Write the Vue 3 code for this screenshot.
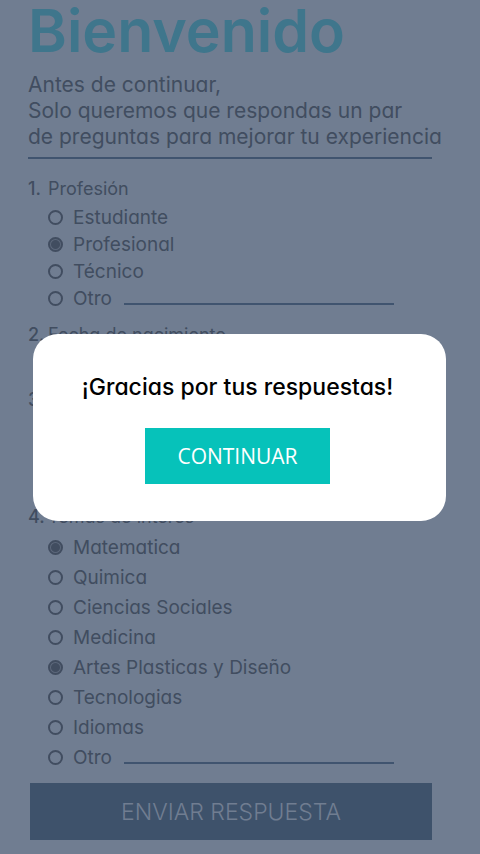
<script setup>
import { ref } from 'vue'

const professions = ['Estudiante', 'Profesional', 'Técnico', 'Otro']
const topics = [
  'Matematica',
  'Quimica',
  'Ciencias Sociales',
  'Medicina',
  'Artes Plasticas y Diseño',
  'Tecnologias',
  'Idiomas',
  'Otro',
]

const profession = ref('Profesional')
const interests = ref(['Matematica', 'Artes Plasticas y Diseño'])
const otherProfession = ref('')
const otherTopic = ref('')
const dialogOpen = ref(true)
</script>

<template>
  <div class="screen">
    <form class="survey" @submit.prevent="dialogOpen = true">
      <header class="intro">
        <h1>Bienvenido</h1>
        <p>
          Antes de continuar,<br />
          Solo queremos que respondas un par<br />
          de preguntas para mejorar tu experiencia
        </p>
      </header>

      <section class="question">
        <h2 id="q1"><span class="number">1.</span>Profesión</h2>
        <ul class="options" role="radiogroup" aria-labelledby="q1">
          <li v-for="(name, i) in professions" :key="name">
            <input :id="'profession-' + i" v-model="profession" type="radio" name="profession" :value="name" class="mark" />
            <label :for="'profession-' + i">{{ name }}</label>
            <input v-if="name === 'Otro'" v-model="otherProfession" type="text" class="line" aria-labelledby="q1" />
          </li>
        </ul>
      </section>

      <section class="question date">
        <h2><span class="number">2.</span>Fecha de nacimiento</h2>
      </section>

      <section class="question third">
        <h2><span class="number">3.</span></h2>
      </section>

      <section class="question">
        <h2 id="q4"><span class="number">4.</span>Temas de interés</h2>
        <ul class="options roomy" role="group" aria-labelledby="q4">
          <li v-for="(name, i) in topics" :key="name">
            <input :id="'topic-' + i" v-model="interests" type="checkbox" :value="name" class="mark" />
            <label :for="'topic-' + i">{{ name }}</label>
            <input v-if="name === 'Otro'" v-model="otherTopic" type="text" class="line" aria-labelledby="q4" />
          </li>
        </ul>
      </section>

      <button type="submit" class="send">ENVIAR RESPUESTA</button>
    </form>

    <div v-if="dialogOpen" class="overlay">
      <div class="dialog" role="dialog" aria-modal="true" aria-labelledby="thanks">
        <p id="thanks">¡Gracias por tus respuestas!</p>
        <button type="button" @click="dialogOpen = false">CONTINUAR</button>
      </div>
    </div>
  </div>
</template>

<style>
body {
  margin: 0;
  background: #707d91;
}
</style>

<style scoped>
.screen {
  position: relative;
  box-sizing: border-box;
  min-height: 100vh;
  background: #707d91;
  color: #414d60;
  font-family: Inter, "Liberation Sans", sans-serif;
  font-feature-settings: "cv11";
}

.survey {
  display: flex;
  flex-direction: column;
  padding: 0 48px 14px 28px;
}

h1,
h2,
p,
ul {
  margin: 0;
  padding: 0;
  font-weight: 400;
}

.intro {
  padding-bottom: 7px;
  margin-bottom: 16px;
  border-bottom: 2px solid #40546f;
}

h1 {
  color: #3f768c;
  font-size: 59px;
  font-weight: 600;
  line-height: 62px;
}

.intro p {
  margin-top: 10px;
  font-size: 21px;
  line-height: 26px;
  white-space: nowrap;
}

.question {
  margin-bottom: 10px;
}

.question.date {
  min-height: 55px;
}

.question.third {
  min-height: 107px;
}

h2 {
  display: flex;
  font-size: 18px;
  line-height: 28px;
}

.number {
  width: 20px;
  font-weight: 500;
}

.options {
  padding: 1px 0 0 20px;
  margin-bottom: -1px;
  list-style: none;
}

.options li {
  display: flex;
  align-items: center;
  height: 27px;
  font-size: 19px;
}

.options.roomy li {
  height: 30px;
}

.mark {
  appearance: none;
  flex: none;
  box-sizing: border-box;
  width: 15px;
  height: 15px;
  margin: 0 10px 0 0;
  border: 2px solid #414d60;
  border-radius: 50%;
}

.mark:checked {
  background: radial-gradient(circle, #414d60 4px, #5c687b 5px);
}

.line {
  flex: 1;
  align-self: stretch;
  min-width: 0;
  margin: 0 38px 7px 12px;
  padding: 0;
  border: 0;
  border-bottom: 2px solid #40546f;
  border-radius: 0;
  background: transparent;
  color: inherit;
  font: inherit;
  outline: none;
}

.roomy .line {
  margin-bottom: 8px;
}

.send {
  height: 57px;
  margin: 2px 0 0 2px;
  border: 0;
  background: #3e526b;
  color: #707d91;
  font-family: inherit;
  font-size: 23px;
  font-weight: 300;
}

.overlay {
  position: absolute;
  inset: 0;
  display: flex;
  align-items: center;
  padding: 0 34px 0 33px;
}

.dialog {
  flex: 1;
  display: flex;
  flex-direction: column;
  align-items: center;
  gap: 27px;
  padding: 39px 20px 37px 16px;
  border-radius: 25px;
  background: #fff;
}

.dialog p {
  color: #000;
  font-size: 23px;
  font-weight: 500;
  line-height: 28px;
}

.dialog button {
  width: 185px;
  height: 56px;
  border: 0;
  background: #06c2ba;
  color: #fff;
  font-family: "Open Sans", "Noto Sans", sans-serif;
  font-size: 21px;
}
</style>
